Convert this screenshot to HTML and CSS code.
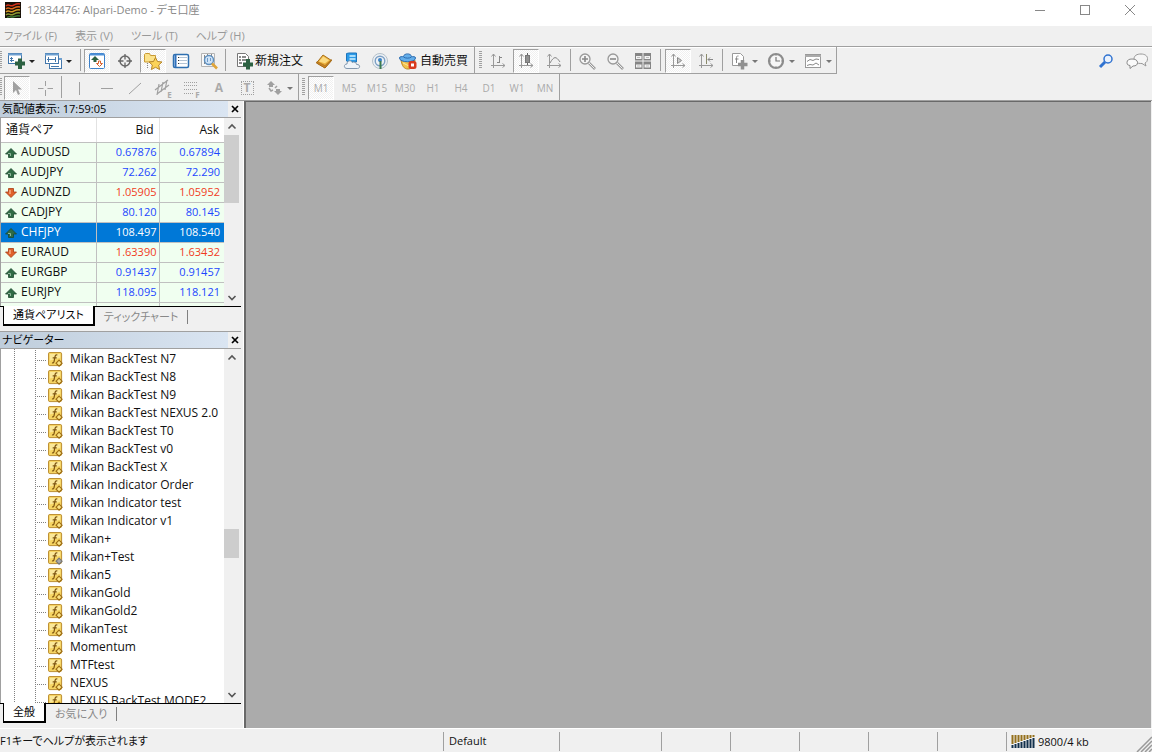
FILE: index.html
```
<!DOCTYPE html>
<html lang="ja">
<head>
<meta charset="utf-8">
<title>12834476: Alpari-Demo - デモ口座</title>
<link rel="stylesheet" href="styles.css">
</head>

<body>
	<!-- 共通アイコン -->
	<svg class="defs" width="0" height="0">
		<symbol id="up" viewBox="0 0 12 12">
			<path d="M6 1.500L11.500 7H8.500v3.500h-5V7H.5z" fill="#2f6b45" stroke="#1d4a30" stroke-width=".8"/>
			<path d="M3 6.500h2.500V9" fill="none" stroke="#8fb89c"/>
		</symbol>
		<symbol id="down" viewBox="0 0 12 12">
			<path d="M6 10.500L11.500 5H8.500V1.500h-5V5H.5z" fill="#e0622c" stroke="#a83c14" stroke-width=".8"/>
			<path d="M5 3v4" stroke="#f8b48c" stroke-width="1.400"/>
		</symbol>
		<symbol id="fx" viewBox="0 0 16 16">
			<rect x=".5" y=".5" width="14" height="14" rx="1.500" fill="#f6d462" stroke="#b8892b"/>
			<path d="M2 2h11v4L2 9z" fill="#fbe89a"/>
			<path d="M10 3.200C8 2.600 7.600 4 7.300 6L6.500 10c-.3 1.500-1 2-2.200 1.500M5 6.300h4.300" fill="none" stroke="#7d5410" stroke-width="1.300"/>
			<path d="M11.800 8.700l3.200 3.200-3.200 3.200-3.200-3.200z" fill="#fbe487" stroke="#9c6c12" stroke-width="1.200"/>
		</symbol>
		<symbol id="fx-off" viewBox="0 0 16 16">
			<rect x=".5" y=".5" width="14" height="14" rx="1.500" fill="#f6d462" stroke="#b8892b"/>
			<path d="M2 2h11v4L2 9z" fill="#fbe89a"/>
			<path d="M10 3.200C8 2.600 7.600 4 7.300 6L6.500 10c-.3 1.500-1 2-2.200 1.500M5 6.300h4.300" fill="none" stroke="#7d5410" stroke-width="1.300"/>
			<path d="M11.800 8.700l3.200 3.200-3.200 3.200-3.200-3.200z" fill="#aaa" stroke="#777" stroke-width="1.200"/>
		</symbol>
		<symbol id="axes" viewBox="0 0 18 18">
			<path d="M4.500 2v14M2 13.500h14M2.500 4.500l2-2.500 2 2.500M13.500 11.500l2.500 2-2.500 2" fill="none" stroke="#999"/>
		</symbol>
		<symbol id="arrow-up" viewBox="0 0 16 16"><path d="M4.500 9.500L8 6l3.500 3.500" fill="none" stroke="#555" stroke-width="1.600"/></symbol>
		<symbol id="arrow-down" viewBox="0 0 16 16"><path d="M4.500 6L8 9.500 11.500 6" fill="none" stroke="#555" stroke-width="1.600"/></symbol>
		<symbol id="close" viewBox="0 0 8 8"><path d="M1 1l6 6M7 1L1 7" stroke="#000" stroke-width="1.700"/></symbol>
	</svg>

	<header class="titlebar">
		<svg class="logo" width="16" height="16" viewBox="0 0 16 16">
			<rect width="16" height="16" fill="#181008"/>
			<g fill="none" stroke-width="1.400">
				<path d="M1 4c3-3 4 1 7-.5S12 1 15 2" stroke="#d8321c"/>
				<path d="M1 7c3-3 4 1 7-.5S12 4 15 5" stroke="#e06a1e"/>
				<path d="M1 10c3-3 4 1 7-.5S12 7 15 8" stroke="#d89a28"/>
				<path d="M1 13c3-3 4 1 7-.5s4-2.500 7-1.500" stroke="#8c9a30"/>
				<path d="M2 15.500c3-2 4 0 6-.5s4-2 7-1" stroke="#3f7a34"/>
			</g>
		</svg>
		<h1>12834476: Alpari-Demo - デモ口座</h1>
		<div class="window-buttons">
			<button aria-label="最小化"><svg width="12" height="12"><path d="M1 6.500h10" stroke="#888"/></svg></button>
			<button aria-label="最大化"><svg width="12" height="12"><rect x="1.500" y="1.500" width="9" height="9" fill="none" stroke="#888"/></svg></button>
			<button aria-label="閉じる"><svg width="12" height="12"><path d="M1 1l10 10M11 1L1 11" stroke="#888"/></svg></button>
		</div>
	</header>

	<nav class="menubar">
		<button>ファイル (F)</button>
		<button>表示 (V)</button>
		<button>ツール (T)</button>
		<button>ヘルプ (H)</button>
	</nav>

	<div class="toolbars">
		<div class="toolbar">
			<span class="grip edge"></span>
			<button class="tool combo" aria-label="新規チャート">
				<svg width="18" height="18"><rect x="1.500" y="1.500" width="13" height="10" fill="#fff" stroke="#4478ac"/><path d="M1 2.500h14" stroke="#6d9fd0" stroke-width="2"/><path d="M4.500 5v5M3 8.500h4M3 6.500h3" stroke="#4478ac"/><path d="M13 6.500v10.500M8 11.500h10" stroke="#2c6142" stroke-width="4"/></svg>
				<i class="caret"></i>
			</button>
			<button class="tool combo" aria-label="チャートの組表示">
				<svg width="18" height="18"><rect x="5.500" y="6.500" width="12" height="10" fill="#fff" stroke="#4478ac"/><rect x="1.500" y="1.500" width="13" height="10" fill="#fff" stroke="#4478ac"/><path d="M1 2.500h14M15 7h3" stroke="#6d9fd0" stroke-width="2"/><path d="M4.500 5v5M3 7.500h9M7 14.500h8M11.500 5v5" fill="none" stroke="#4478ac"/></svg>
				<i class="caret"></i>
			</button>
			<span class="sep wide"></span>
			<button class="tool pressed" aria-label="気配値表示">
				<svg width="18" height="18"><rect x="1.500" y="1.500" width="15" height="15" rx="1" fill="#fff" stroke="#3c80c8"/><path d="M2 2.500h14" stroke="#4c90d8" stroke-width="2"/><path d="M7 4l4 4H8.500v2h-3V8H3z" fill="#2c6142"/><path d="M11.500 14.500l-3-3h2V9h2v2.500h2z" fill="#fff" stroke="#d8602c"/></svg>
			</button>
			<button class="tool" aria-label="データウィンドウ">
				<svg width="18" height="18"><circle cx="9" cy="9" r="5" fill="none" stroke="#666" stroke-width="1.500"/><path d="M9 2v5.500M9 10.500V16M2 9h5.500M10.500 9H16" stroke="#666" stroke-width="1.300"/></svg>
			</button>
			<button class="tool pressed" aria-label="ナビゲーター">
				<svg width="20" height="18"><path d="M1.500 10V2.500l1-1h4l1 2h5V10z" fill="#fbe28a" stroke="#c89a34"/><path d="M4.500 11v6" stroke="#888" stroke-dasharray="1"/><path d="M12.500 5.500l2 4 4.500.5-3.300 3 .9 4.500-4.100-2.200-4.100 2.200.9-4.500L6 10l4.500-.5z" fill="#fbd358" stroke="#b5852a"/></svg>
			</button>
			<button class="tool" aria-label="ターミナル">
				<svg width="18" height="18"><rect x="1.500" y="2.500" width="15" height="13" rx="1.500" fill="#fff" stroke="#2f6fb0" stroke-width="1.500"/><path d="M3.500 3v12" stroke="#2f70bd" stroke-width="2"/><path d="M6 5.500h9M6 8.500h9M6 11.500h9" stroke="#b4c4d4"/><path d="M6 5.500h1M6 8.500h1M6 11.500h1" stroke="#333"/></svg>
			</button>
			<button class="tool" aria-label="ストラテジーテスター">
				<svg width="18" height="18"><path d="M1.500 1.500h13v13h-13z" fill="#f8f8f8" stroke="#b4b4b4"/><path d="M4.500 3v9M7.500 2v4M11.500 2v4" stroke="#888"/><circle cx="9" cy="8" r="4.500" fill="#cfe4f8" stroke="#5f8fbe" stroke-width="1.400"/><path d="M7.500 6v4M10.500 6v3" stroke="#6f9ac8"/><path d="M12 11.500l5 5" stroke="#e0a53a" stroke-width="2.600"/></svg>
			</button>
			<span class="sep"></span>
			<button class="tool text order">
				<svg width="18" height="18"><path d="M2.500 1.500h8l3 3v10h-11z" fill="#fff" stroke="#777"/><path d="M4 5h2M7 5h4M4 8h2M7 8h4M4 11h3" stroke="#666" stroke-width="1.400"/><path d="M13 7v10.500M8 12.500h10" stroke="#2c6142" stroke-width="4"/></svg>
				新規注文
			</button>
			<button class="tool" aria-label="メタエディター">
				<svg width="18" height="18"><path d="M1.500 11L8 3l8.500 5.500-6.500 7.500z" fill="#edb23e" stroke="#a8701a"/><path d="M4 9.500L8.200 4.500 14 8.200l-4 3z" fill="#fbdb83"/><path d="M1.500 11l8.500 5 6.500-7.500v-1L10 13.500 2 9.500z" fill="#c98424" stroke="#955c12" stroke-width=".5"/></svg>
			</button>
			<button class="tool" aria-label="仮想ホスティング">
				<svg width="18" height="18"><path d="M3.500 1.500L6 1h7.500v9h-8l-2-1z" fill="#2c9be8" stroke="#1c74bc"/><path d="M6.500 3h6v2h-6zM6.500 6h6v2h-6z" fill="#a8dcfa"/><path d="M4 16.500c-3.500 0-3.500-4.500 0-4.500 0-4 4.500-4 5.200-1.500 2-1.200 4.300 0 4.300 2 4-.5 4 4 1 4z" fill="#eef3f8" stroke="#8398ae"/></svg>
			</button>
			<button class="tool" aria-label="シグナル">
				<svg width="18" height="18"><circle cx="9" cy="9" r="7.500" fill="#edf1f5" stroke="#b4c0ca"/><circle cx="9" cy="9" r="4.800" fill="none" stroke="#7c9fc4" stroke-width="1.400"/><circle cx="9" cy="8" r="2" fill="#3c84c8"/><path d="M9.500 9v8" stroke="#3c7a50" stroke-width="2"/></svg>
			</button>
			<button class="tool text auto">
				<svg width="20" height="18"><path d="M3 8c1 6 3 9 7 9s6-3 7-9z" fill="#f2c24a" stroke="#b98622"/><path d="M5 11l6 3 3-3" stroke="#fbe49c" fill="none"/><path d="M1.500 6c0-2 2.500-1 4-1.500C6 1 13 1 13.500 4.500c1.500.5 4-.5 4 1.500 0 5-16 5-16 0z" fill="#63aeea" stroke="#2c6cb0"/><path d="M5.500 5c2 1.500 6 1.500 8 0" fill="none" stroke="#2c6cb0"/><rect x="10.500" y="9" width="8" height="8" rx="2.500" fill="#d83a1e"/><rect x="13" y="11.500" width="3" height="3" fill="#fff"/></svg>
				自動売買
			</button>
			<span class="sep end"></span>
			<span class="grip"></span>
			<button class="tool" aria-label="バーチャート">
				<svg width="18" height="18"><use href="#axes"/><path d="M10.500 4v7M8 10.500h2.500M10.500 5.500H13" stroke="#888"/></svg>
			</button>
			<button class="tool pressed" aria-label="ローソク足">
				<svg width="18" height="18"><use href="#axes"/><path d="M10.500 1v12" stroke="#666"/><rect x="8.500" y="3.500" width="4" height="7" fill="#909090" stroke="#777"/></svg>
			</button>
			<button class="tool" aria-label="ラインチャート">
				<svg width="18" height="18"><use href="#axes"/><path d="M5 11c4-7 6-7 10-1" fill="none" stroke="#888"/></svg>
			</button>
			<span class="sep"></span>
			<button class="tool" aria-label="ズームイン">
				<svg width="18" height="18"><circle cx="7" cy="7" r="5" fill="#f4f4f4" stroke="#999" stroke-width="1.300"/><path d="M7 4v6M4 7h6" stroke="#888" stroke-width="1.600"/><path d="M11 11l6 6" stroke="#999" stroke-width="2.600"/><path d="M11 11l5.500 5.500" stroke="#eee"/></svg>
			</button>
			<button class="tool" aria-label="ズームアウト">
				<svg width="18" height="18"><circle cx="7" cy="7" r="5" fill="#f4f4f4" stroke="#999" stroke-width="1.300"/><path d="M4 7h6" stroke="#888" stroke-width="1.600"/><path d="M11 11l6 6" stroke="#999" stroke-width="2.600"/><path d="M11 11l5.500 5.500" stroke="#eee"/></svg>
			</button>
			<button class="tool" aria-label="整列">
				<svg width="18" height="18"><path d="M1 1h7.500v7.500H1zM9.500 1H17v7.500H9.500zM1 9.500h7.500V17H1zM9.500 9.500H17V17H9.500z" fill="#858585"/><path d="M2 4h5.500v3H2zM10.500 4H16v3h-5.500zM2 12.500h5.500v3H2zM10.500 12.500H16v3h-5.500z" fill="#f2f2f2"/><path d="M3 5.500h3M12 5.500h3M3 14h3M12 14h3" stroke="#bbb"/></svg>
			</button>
			<span class="sep mid"></span>
			<button class="tool pressed" aria-label="自動スクロール">
				<svg width="18" height="18"><use href="#axes"/><path d="M8.500 5.500v6l4-3z" fill="#ccc" stroke="#888"/></svg>
			</button>
			<button class="tool" aria-label="チャートシフト">
				<svg width="18" height="18"><use href="#axes"/><path d="M9.500 2v10" stroke="#8a8a6a"/><path d="M11 7.500h5M13 5.500l-2 2 2 2" fill="none" stroke="#888"/></svg>
			</button>
			<span class="sep"></span>
			<button class="tool combo" aria-label="インディケータ">
				<svg width="18" height="18"><path d="M2.500 1.500h8l3 3v9h-11z" fill="#fff" stroke="#999"/><path d="M8.500 4c-2-.5-2 1-2 3v4M5 7h3.500" fill="none" stroke="#888"/><path d="M12.500 8v9.500M8 12.500h9.500" stroke="#909090" stroke-width="3.500"/></svg>
				<i class="caret"></i>
			</button>
			<button class="tool combo" aria-label="時間足設定">
				<svg width="18" height="18"><circle cx="9" cy="9" r="7" fill="#f6f6f6" stroke="#8c8c8c" stroke-width="2.200"/><path d="M9 5v4h4" fill="none" stroke="#777" stroke-width="1.200"/><path d="M9 3v1M9 14v1M3 9h1M14 9h1" stroke="#999"/></svg>
				<i class="caret"></i>
			</button>
			<button class="tool combo" aria-label="定型チャート">
				<svg width="18" height="18"><rect x="1.500" y="2.500" width="15" height="13" fill="#fff" stroke="#999"/><path d="M1 4h16" stroke="#aaa" stroke-width="2"/><path d="M3 9.500l3-2 3 1 3-1.500 3 .5M3 13.500l3-1 3 .5 3-2 3 2" fill="none" stroke="#888"/></svg>
				<i class="caret"></i>
			</button>
		</div>

		<div class="search">
			<button aria-label="検索"><svg width="16" height="16"><circle cx="10" cy="6" r="4" fill="#eaf2fd" stroke="#2f72d0" stroke-width="1.500"/><path d="M7 9l-5 5" stroke="#2f72d0" stroke-width="3"/></svg></button>
			<button aria-label="チャット"><svg width="22" height="18"><path d="M19 11l1 3-4-2.500c-5 0-8-1-8-4.500s3-5 7-5 6.500 2 6.500 4.500-1 4-2.500 4.500z" fill="#f6f6f6" stroke="#999"/><path d="M4 13.500v3l3-2.500c3 0 4.500-1 4.500-3.500S9 7 6 7 1 8 1 10.500s1 2.500 3 3z" fill="#fafafa" stroke="#888"/></svg></button>
		</div>

		<div class="toolbar small">
			<span class="grip edge"></span>
			<button class="tool pressed" aria-label="カーソル">
				<svg width="18" height="18"><path d="M5 2v12l3-3 2 5 2-1-2-4.500h4z" fill="#a0a0a0"/></svg>
			</button>
			<button class="tool" aria-label="十字カーソル">
				<svg width="18" height="18"><path d="M9.500 2v5M9.500 11v6M2 9.500h5.500M11.500 9.500H17" stroke="#a0a0a0"/></svg>
			</button>
			<span class="sep"></span>
			<button class="tool" aria-label="垂直線"><svg width="18" height="18"><path d="M9.500 3v13" stroke="#a0a0a0"/></svg></button>
			<button class="tool" aria-label="水平線"><svg width="18" height="18"><path d="M3 9.500h12" stroke="#a0a0a0"/></svg></button>
			<button class="tool" aria-label="トレンドライン"><svg width="18" height="18"><path d="M3 15L15 4" stroke="#a0a0a0"/></svg></button>
			<button class="tool sub" aria-label="チャネル"><svg width="18" height="18"><path d="M1 11L14 1M3 15L15 6M5 5l-2 11M9 3L7 13M13 1l-2 10" stroke="#a0a0a0" stroke-width="1.200"/></svg><small>E</small></button>
			<button class="tool sub" aria-label="フィボナッチ"><svg width="18" height="18"><path d="M2 3.500h14M2 6.500h14M2 10.500h14M2 14.500h9" stroke="#a0a0a0" stroke-dasharray="1"/></svg><small>F</small></button>
			<button class="tool letter">A</button>
			<button class="tool letter"><span class="label">T</span></button>
			<button class="tool combo" aria-label="矢印">
				<svg width="18" height="18"><path d="M6 2l4 4H8v2H4V6H2zM13 16l-4-4h2v-2h4v2h2z" fill="#a0a0a0"/><path d="M4 9l2 3 2-1M10 9l2-2" fill="none" stroke="#a0a0a0" stroke-width="1.500"/></svg>
				<i class="caret"></i>
			</button>
			<span class="sep end"></span>
			<span class="grip"></span>
			<button class="tool pressed">M1</button>
			<button class="tool">M5</button>
			<button class="tool">M15</button>
			<button class="tool">M30</button>
			<button class="tool">H1</button>
			<button class="tool">H4</button>
			<button class="tool">D1</button>
			<button class="tool">W1</button>
			<button class="tool">MN</button>
		</div>
	</div>

	<main class="workspace">
		<aside class="side">
			<section class="panel market">
				<div class="panel-head">
					<h2>気配値表示: 17:59:05</h2>
					<button aria-label="閉じる"><svg width="8" height="8"><use href="#close"/></svg></button>
				</div>
				<div class="panel-body">
					<div class="scroll-content">
						<table class="quotes">
							<thead>
								<tr><th>通貨ペア</th><th>Bid</th><th>Ask</th></tr>
							</thead>
							<tbody>
								<tr><td><svg><use href="#up"/></svg>AUDUSD</td><td>0.67876</td><td>0.67894</td></tr>
								<tr><td><svg><use href="#up"/></svg>AUDJPY</td><td>72.262</td><td>72.290</td></tr>
								<tr class="fall"><td><svg><use href="#down"/></svg>AUDNZD</td><td>1.05905</td><td>1.05952</td></tr>
								<tr><td><svg><use href="#up"/></svg>CADJPY</td><td>80.120</td><td>80.145</td></tr>
								<tr class="selected"><td><svg><use href="#up"/></svg>CHFJPY</td><td>108.497</td><td>108.540</td></tr>
								<tr class="fall"><td><svg><use href="#down"/></svg>EURAUD</td><td>1.63390</td><td>1.63432</td></tr>
								<tr><td><svg><use href="#up"/></svg>EURGBP</td><td>0.91437</td><td>0.91457</td></tr>
								<tr><td><svg><use href="#up"/></svg>EURJPY</td><td>118.095</td><td>118.121</td></tr>
								<tr><td></td><td></td><td></td></tr>
							</tbody>
						</table>
					</div>
					<div class="scrollbar">
						<button aria-label="上へ"><svg width="16" height="16"><use href="#arrow-up"/></svg></button>
						<div class="track"><div class="thumb"></div></div>
						<button aria-label="下へ"><svg width="16" height="16"><use href="#arrow-down"/></svg></button>
					</div>
				</div>
				<div class="tabs">
					<button class="active">通貨ペアリスト</button>
					<button>ティックチャート</button>
				</div>
			</section>

			<section class="panel navigator">
				<div class="panel-head">
					<h2>ナビゲーター</h2>
					<button aria-label="閉じる"><svg width="8" height="8"><use href="#close"/></svg></button>
				</div>
				<div class="panel-body">
					<div class="scroll-content">
						<ul class="tree">
							<li><svg><use href="#fx"/></svg>Mikan BackTest N7</li>
							<li><svg><use href="#fx"/></svg>Mikan BackTest N8</li>
							<li><svg><use href="#fx"/></svg>Mikan BackTest N9</li>
							<li><svg><use href="#fx"/></svg>Mikan BackTest NEXUS 2.0</li>
							<li><svg><use href="#fx"/></svg>Mikan BackTest T0</li>
							<li><svg><use href="#fx"/></svg>Mikan BackTest v0</li>
							<li><svg><use href="#fx"/></svg>Mikan BackTest X</li>
							<li><svg><use href="#fx"/></svg>Mikan Indicator Order</li>
							<li><svg><use href="#fx"/></svg>Mikan Indicator test</li>
							<li><svg><use href="#fx"/></svg>Mikan Indicator v1</li>
							<li><svg><use href="#fx"/></svg>Mikan+</li>
							<li><svg><use href="#fx-off"/></svg>Mikan+Test</li>
							<li><svg><use href="#fx"/></svg>Mikan5</li>
							<li><svg><use href="#fx"/></svg>MikanGold</li>
							<li><svg><use href="#fx"/></svg>MikanGold2</li>
							<li><svg><use href="#fx"/></svg>MikanTest</li>
							<li><svg><use href="#fx"/></svg>Momentum</li>
							<li><svg><use href="#fx"/></svg>MTFtest</li>
							<li><svg><use href="#fx"/></svg>NEXUS</li>
							<li><svg><use href="#fx"/></svg>NEXUS BackTest MODE2</li>
						</ul>
					</div>
					<div class="scrollbar">
						<button aria-label="上へ"><svg width="16" height="16"><use href="#arrow-up"/></svg></button>
						<div class="track"><div class="thumb"></div></div>
						<button aria-label="下へ"><svg width="16" height="16"><use href="#arrow-down"/></svg></button>
					</div>
				</div>
				<div class="tabs">
					<button class="active">全般</button>
					<button>お気に入り</button>
				</div>
			</section>
		</aside>
		<div class="charts"></div>
	</main>

	<footer class="statusbar">
		<span class="help">F1キーでヘルプが表示されます</span>
		<span class="profile">Default</span>
		<span class="cell-l"></span>
		<span class="cell-s"></span>
		<span class="cell-s"></span>
		<span class="cell-s"></span>
		<span class="cell-s"></span>
		<span class="cell-s"></span>
		<span class="traffic">
			<svg width="24" height="14"><path d="M1.500 0v9M4.500 0v8M7.500 0v7M10.500 0v6M13.500 0v5M16.500 0v4M19.500 0v3M22.500 0v2" stroke="#94701c" stroke-width="2"/><path d="M1.500 10v3M4.500 9v4M7.500 8v5M10.500 7v6M13.500 6v7M16.500 5v8M19.500 4v9M22.500 3v10" stroke="#12304c" stroke-width="2"/></svg>
			9800/4 kb
		</span>
		<svg class="resize" width="16" height="16"><path d="M1 16L16 1M5 16L16 5M9 16l7-7M13 16l3-3" stroke="#999" stroke-width="1.500"/></svg>
	</footer>
</body>
</html>
```
FILE: styles.css
```
* {
	box-sizing: border-box;
}
body {
	margin: 0;
	height: 100vh;
	display: flex;
	flex-direction: column;
	overflow: hidden;
	background-color: #f0f0f0;
	color: #111;
	font: 12px/18px "Open Sans", "Noto Sans CJK JP", sans-serif;
	font-feature-settings: "palt";
}
h1, h2 {
	margin: 0;
	font-size: 11px;
	font-weight: normal;
}
button {
	border: 0;
	padding: 0;
	background: none;
	color: inherit;
	font: inherit;
	font-feature-settings: inherit;
	white-space: nowrap;
}
svg {
	flex: none;
}
.defs {
	position: absolute;
}

/* タイトルバー */
.titlebar {
	display: flex;
	align-items: center;
	gap: 6px;
	height: 26px;
	padding: 0 0 6px 5px;
	background-color: #fff;
	color: #888;
}
.window-buttons {
	display: flex;
	margin-left: auto;
}
.window-buttons button {
	display: flex;
	justify-content: center;
	width: 45px;
}

/* メニュー */
.menubar {
	display: flex;
	gap: 18px;
	height: 20px;
	padding-left: 4px;
	color: #999;
	font-size: 11px;
}

/* ツールバー */
.toolbars {
	display: grid;
	grid-template-columns: auto 1fr;
	border-top: 1px solid #a0a0a0;
	border-bottom: 1px solid #a0a0a0;
	box-shadow: inset 0 1px #fff;
}
.toolbar {
	display: flex;
	justify-self: start;
	align-items: stretch;
	height: 27px;
	border-right: 1px solid #a0a0a0;
	border-bottom: 1px solid #a0a0a0;
}
.toolbar.small {
	grid-column: 1 / 3;
	height: 26px;
	border-bottom: 0;
	color: #aaa;
	font-size: 10px;
}
.tool {
	display: flex;
	align-items: center;
	justify-content: center;
	width: 28px;
	border: solid transparent;
	border-width: 2px 1px 0;
}
.tool.pressed {
	width: 26px;
	margin: 2px 1px 0;
	border-width: 1px;
	border-color: #a0a0a0 #fff #fff #a0a0a0;
	background: repeating-conic-gradient(#fff 0 25%, #f0f0f0 0 50%) 0 0 / 2px 2px;
}
.tool.combo {
	width: 37px;
	gap: 4px;
}
.small .tool.combo {
	width: 35px;
}
.tool.text {
	gap: 2px;
}
.tool.order {
	width: 82px;
}
.tool.auto {
	width: 78px;
}
.tool.letter {
	font-size: 12px;
	font-weight: bold;
}
.tool .label {
	width: 13px;
	border: 1px dotted #a0a0a0;
	line-height: 12px;
}
.tool.sub small {
	align-self: flex-end;
	margin-left: -5px;
	font-size: 8px;
	line-height: 10px;
	font-weight: bold;
}
.caret {
	border: 3px solid transparent;
	border-top-color: #222;
	border-bottom: 0;
}
.sep ~ .grip ~ .combo .caret,
.small .caret {
	border-top-color: #777;
}
.sep {
	width: 5px;
	margin: 2px 0;
	background: linear-gradient(#a0a0a0, #a0a0a0) 2px 0 / 1px 100% no-repeat;
}
.sep.mid {
	width: 7px;
	background-position-x: 3px;
}
.sep.wide {
	width: 7px;
	background-position-x: 4px;
}
.sep.end {
	margin: 0;
}
.small .sep {
	width: 6px;
}
.small .sep.end {
	width: 4px;
}
.grip {
	width: 7px;
	margin: 4px 0;
	background: repeating-linear-gradient(#a0a0a0 0 1px, transparent 1px 2px) 2px 0 / 3px 100% no-repeat;
}
.grip.edge {
	width: 2px;
	background-position-x: -1px;
}
.small .grip.edge {
	width: 3px;
}
.search {
	display: flex;
	align-items: center;
	justify-self: end;
	gap: 12px;
	padding-right: 4px;
}
.search button {
	display: flex;
}

/* 作業領域 */
.workspace {
	flex: 1;
	display: flex;
	min-height: 0;
}
.side {
	display: flex;
	flex-direction: column;
	width: 244px;
	padding-right: 2px;
	border-right: 1px solid #fff;
}
.charts {
	flex: 1;
	margin-right: 1px;
	border: solid #696969;
	border-width: 1px 0 0 2px;
	background-color: #ababab;
}
.panel {
	display: flex;
	flex-direction: column;
	min-height: 0;
}
.market {
	height: 231px;
	border-bottom: 1px solid #a0a0a0;
}
.navigator {
	flex: 1;
}
.panel-head {
	display: flex;
	height: 17px;
	border-bottom: 1px solid #a0a0a0;
	line-height: 15px;
}
.panel-head h2 {
	flex: 1;
	padding-left: 2px;
	background: linear-gradient(90deg, #bfcddb, #dae5f2);
	color: #000;
}
.panel-head button {
	display: flex;
	align-items: center;
	justify-content: center;
	width: 13px;
}
.panel-body {
	flex: 1;
	display: flex;
	min-height: 0;
	border-left: 1px solid #a0a0a0;
	background-color: #fff;
}
.scroll-content {
	flex: 1;
	overflow: hidden;
}
.scrollbar {
	display: flex;
	flex-direction: column;
	width: 17px;
	padding-right: 1px;
	background-color: #f0f0f0;
}
.scrollbar button {
	display: flex;
	height: 17px;
	align-items: center;
}
.track {
	flex: 1;
	display: flex;
	flex-direction: column;
}
.thumb {
	height: 68px;
	margin-right: 1px;
	background-color: #cdcdcd;
}
/* 現在のスクロール位置 */
.navigator .track::before {
	content: "";
	flex: 0 1 51%;
}
.navigator .thumb {
	height: 29px;
}

/* 気配値 */
.quotes {
	width: 100%;
	table-layout: fixed;
	border-collapse: collapse;
}
.quotes th {
	height: 24px;
	padding: 0 5px;
	border-right: 1px solid #e2e2e2;
	border-bottom: 1px solid #c0c0c0;
	font-weight: normal;
	text-align: right;
}
.quotes th:first-child {
	width: 95px;
	text-align: left;
}
.quotes th:nth-child(2) {
	width: 63px;
}
.quotes th:last-child {
	border-right: 0;
}
.quotes td {
	height: 20px;
	padding: 0 2px;
	border-right: 1px solid #c0c0c0;
	border-bottom: 1px solid #c0c0c0;
	background-color: #f0fff0;
	color: #1c46ff;
	font-size: 11px;
	text-align: right;
}
.quotes td:first-child {
	padding-left: 4px;
	color: #111;
	font-size: 12px;
	text-align: left;
}
.quotes td:last-child {
	padding-right: 4px;
	border-right: 0;
}
.quotes svg {
	width: 12px;
	height: 12px;
	margin-right: 4px;
	vertical-align: -3px;
}
.quotes .fall td {
	color: #f03c1e;
}
.quotes .fall td:first-child {
	color: #111;
}
.quotes .selected td,
.quotes .selected td:first-child {
	background-color: #0078d7;
	color: #fff;
}

/* ナビゲーター */
.tree {
	list-style: none;
	margin: 0;
	padding: 1px 0 0 13px;
	background: repeating-linear-gradient(#808080 0 1px, transparent 1px 2px) 13px 0 / 1px 100% no-repeat;
}
.tree li {
	display: flex;
	align-items: center;
	gap: 7px;
	height: 18px;
	margin-left: 21px;
	padding-left: 13px;
	background:
		repeating-linear-gradient(#808080 0 1px, transparent 1px 2px) 0 0 / 1px 100% no-repeat,
		repeating-linear-gradient(90deg, #808080 0 1px, transparent 1px 2px) 0 10px / 11px 1px no-repeat;
	white-space: nowrap;
}
.tree svg {
	width: 15px;
	height: 15px;
}

/* タブ */
.tabs {
	display: flex;
	height: 25px;
	padding-left: 3px;
	border-top: 1px solid #000;
	color: #888;
	font-size: 11px;
}
.tabs button {
	padding: 0 9px;
}
.tabs button:last-child {
	height: 14px;
	margin-top: 3px;
	border-right: 1px solid #808080;
	line-height: 12px;
}
.tabs .active {
	height: 20px;
	margin-top: -1px;
	border: solid #000;
	border-width: 0 2px 2px 1px;
	background-color: #fff;
	color: #000;
}

/* ステータスバー */
.statusbar {
	display: flex;
	height: 24px;
	padding-top: 3px;
	border-top: 1px solid #fff;
	font-size: 11px;
}
.statusbar span {
	height: 19px;
	border-left: 1px solid #a0a0a0;
	white-space: nowrap;
}
.statusbar .help {
	flex: 1;
	border: 0;
}
.profile {
	width: 116px;
	padding-left: 5px;
}
.cell-l {
	width: 102px;
}
.cell-s {
	width: 69px;
}
.traffic {
	display: flex;
	align-items: center;
	gap: 3px;
	width: 130px;
	padding-left: 4px;
}
.resize {
	align-self: flex-end;
}
```
